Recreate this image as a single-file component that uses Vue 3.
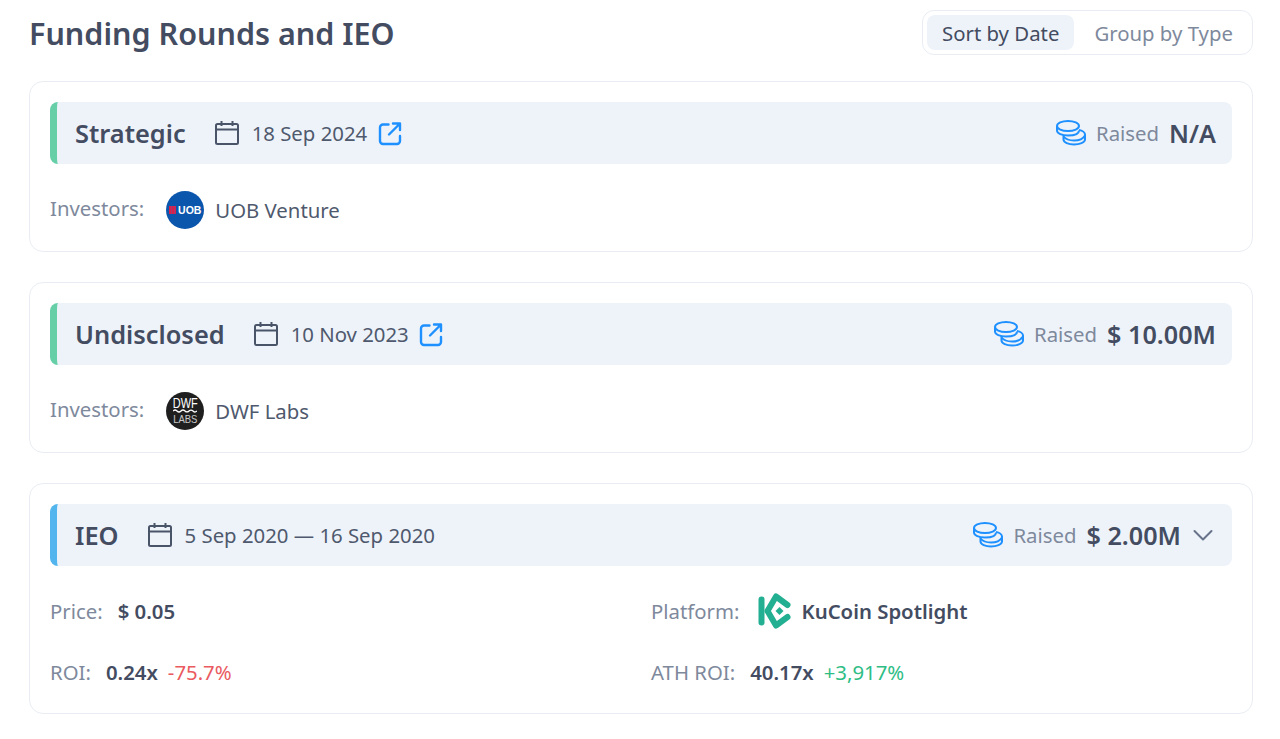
<template>
  <div class="page">
    <div class="top">
      <h2 class="title">Funding Rounds and IEO</h2>
      <div class="switch">
        <span class="switch-item active">Sort by Date</span>
        <span class="switch-item">Group by Type</span>
      </div>
    </div>

    <!-- Plain rounds -->
    <div v-for="round in rounds" :key="round.name" class="card">
      <div class="head green">
        <span class="name">{{ round.name }}</span>
        <svg class="cal" width="26" height="26" viewBox="0 0 26 26" fill="none" stroke="#4a5468" stroke-width="2">
          <rect x="2" y="4" width="22" height="20" rx="1.5" />
          <path d="M2 9.5H24M7.5 1V6M18.5 1V6" />
        </svg>
        <span class="date">{{ round.date }}</span>
        <svg class="ext" width="24" height="25" viewBox="0 0 24 25" fill="none" stroke="#1e90ff" stroke-width="2.4" stroke-linecap="round" stroke-linejoin="round">
          <path d="M10.500 3.500H5a3 3 0 0 0-3 3V20a3 3 0 0 0 3 3H19a3 3 0 0 0 3-3V15" />
          <path d="M11 13.500L21 3.500M15 2.500H22V9" />
        </svg>
        <div class="raised">
          <svg class="coins" width="30" height="26" viewBox="0 0 30 26" fill="none" stroke="#1e90ff" stroke-width="2">
            <ellipse cx="12" cy="6" rx="11" ry="5" />
            <path d="M1 6V10.500C1 13.500 6 15.500 12 15.500S23 14 23 10.500" />
            <path d="M7.500 15V19.500C7.500 22.500 12.500 24.500 18 24.500S29 22.500 29 19.500V14.500C29 12.500 26.500 10.500 23 10" />
            <path d="M7.500 16.500C9.500 19 14 20.500 18 20.500S27 19 29 15.500" />
          </svg>
          <span class="raised-label">Raised</span>
          <span class="amount">{{ round.amount }}</span>
        </div>
      </div>
      <div class="investors">
        <span class="label">Investors:</span>
        <span class="logo" :class="round.logoClass">
          <template v-if="round.logoClass === 'uob'"><i class="uob-mark"></i>UOB</template>
          <template v-else>
            <b>DWF</b>
            <svg class="wave" width="24" height="4" viewBox="0 0 24 4" fill="none" stroke="#ffffff" stroke-width="1.200">
              <path d="M0 2q2-2 4 0t4 0t4 0t4 0t4 0t4 0" />
            </svg>
            <em>LABS</em>
          </template>
        </span>
        <span class="investor">{{ round.investor }}</span>
      </div>
    </div>

    <!-- IEO -->
    <div class="card">
      <div class="head blue">
        <span class="name">IEO</span>
        <svg class="cal" width="26" height="26" viewBox="0 0 26 26" fill="none" stroke="#4a5468" stroke-width="2">
          <rect x="2" y="4" width="22" height="20" rx="1.500" />
          <path d="M2 9.500H24M7.500 1V6M18.500 1V6" />
        </svg>
        <span class="date">5 Sep 2020 — 16 Sep 2020</span>
        <div class="raised">
          <svg class="coins" width="30" height="26" viewBox="0 0 30 26" fill="none" stroke="#1e90ff" stroke-width="2">
            <ellipse cx="12" cy="6" rx="11" ry="5" />
            <path d="M1 6V10.500C1 13.500 6 15.500 12 15.500S23 14 23 10.500" />
            <path d="M7.500 15V19.500C7.500 22.500 12.500 24.500 18 24.500S29 22.500 29 19.500V14.500C29 12.500 26.500 10.500 23 10" />
            <path d="M7.500 16.500C9.500 19 14 20.500 18 20.500S27 19 29 15.500" />
          </svg>
          <span class="raised-label">Raised</span>
          <span class="amount">$ 2.00M</span>
          <svg class="chev" width="20" height="12" viewBox="0 0 20 12" fill="none" stroke="#66738a" stroke-width="2" stroke-linecap="round" stroke-linejoin="round">
            <path d="M1.500 2L10 10.500L18.500 2" />
          </svg>
        </div>
      </div>
      <div class="grid">
        <div class="cell">
          <span class="label">Price:</span>
          <span class="strong">$ 0.05</span>
        </div>
        <div class="cell">
          <span class="label">Platform:</span>
          <svg class="kucoin" width="34" height="36" viewBox="0 0 34 36" fill="none" stroke="#23af91" stroke-width="6" stroke-linecap="round" stroke-linejoin="round">
            <path d="M3.500 6.500V29.500" />
            <path d="M29.500 12L18 3.500L9.500 18L18 32.500L29.500 24" />
            <path d="M21.500 14L25.500 18L21.500 22L17.500 18Z" fill="#23af91" stroke="none" />
          </svg>
          <span class="strong">KuCoin Spotlight</span>
        </div>
        <div class="cell">
          <span class="label">ROI:</span>
          <span class="strong">0.24x</span>
          <span class="down">-75.7%</span>
        </div>
        <div class="cell">
          <span class="label">ATH ROI:</span>
          <span class="strong">40.17x</span>
          <span class="up">+3,917%</span>
        </div>
      </div>
    </div>
  </div>
</template>

<script setup>
const rounds = [
  { name: 'Strategic', date: '18 Sep 2024', amount: 'N/A', investor: 'UOB Venture', logoClass: 'uob' },
  { name: 'Undisclosed', date: '10 Nov 2023', amount: '$ 10.00M', investor: 'DWF Labs', logoClass: 'dwf' }
]
</script>

<style>
html,
body {
  margin: 0;
  background: #ffffff;
}
</style>

<style scoped>
.page {
  box-sizing: border-box;
  width: 1280px;
  height: 739px;
  padding: 10px 27px 0 29px;
  overflow: hidden;
  font-family: "Noto Sans", "Open Sans", sans-serif;
  color: #434c61;
}

.top {
  display: flex;
  align-items: center;
  justify-content: space-between;
  height: 45px;
  margin-bottom: 26px;
}

.title {
  margin: 0;
  font-size: 30.5px;
  font-weight: 600;
  line-height: 48px;
}

.switch {
  display: flex;
  box-sizing: border-box;
  height: 45px;
  width: 331px;
  padding: 4px;
  border: 1px solid #e9edf3;
  border-radius: 12px;
  gap: 5px;
}

.switch-item {
  display: flex;
  align-items: center;
  justify-content: center;
  font-size: 20.35px;
  color: #7e899c;
  padding: 0 15px;
  border-radius: 8px;
  white-space: nowrap;
}

.switch-item.active {
  background: #eef3fa;
  color: #434c61;
}

.card {
  box-sizing: border-box;
  padding: 20px 20px 0;
  border: 1px solid #e9edf3;
  border-radius: 14px;
  margin-bottom: 30px;
}

.head {
  display: flex;
  align-items: center;
  box-sizing: border-box;
  height: 62px;
  padding: 0 16px 0 18px;
  background: #eef3fa;
  border-left: 7px solid #66cfa8;
  border-radius: 8px;
}

.head.blue {
  border-left-color: #52b5ee;
}

.name {
  font-size: 25.4px;
  font-weight: 600;
  margin-right: 28px;
}

.cal {
  margin-right: 12px;
}

.date {
  font-size: 20.35px;
  color: #4f596d;
}

.ext {
  margin-left: 10.5px;
}

.raised {
  display: flex;
  align-items: center;
  margin-left: auto;
}

.raised-label {
  font-size: 20.35px;
  color: #7e899c;
  margin-left: 10px;
  margin-right: 10px;
}

.amount {
  font-size: 25.2px;
  font-weight: 600;
}

.chev {
  margin-left: 12px;
  margin-right: 3px;
}

.investors {
  display: flex;
  align-items: center;
  box-sizing: border-box;
  height: 87px;
  padding-top: 4px;
  font-size: 20.35px;
}

.label {
  color: #7e899c;
  font-size: 20.35px;
}

.investors .label {
  margin-top: -4px;
  margin-right: 22px;
}

.logo {
  display: flex;
  align-items: center;
  justify-content: center;
  width: 38px;
  height: 38px;
  border-radius: 50%;
  margin-right: 11px;
  color: #ffffff;
}

.uob {
  background: #0b56ad;
  font-family: "Liberation Sans", sans-serif;
  font-size: 10.5px;
  font-weight: 700;
  gap: 2px;
}

.uob-mark {
  display: block;
  width: 7px;
  height: 8px;
  background: repeating-linear-gradient(90deg, #d81e4d 0, #d81e4d 2px, #a83a6a 2px, #a83a6a 3px);
}

.dwf {
  flex-direction: column;
  background: #1f1f1f;
  font-family: "Liberation Sans", sans-serif;
}

.dwf b {
  display: block;
  font-size: 11px;
  font-weight: 400;
  line-height: 10px;
  transform: scaleY(1.3);
}

.wave {
  display: block;
  margin: 1px 0;
}

.dwf em {
  display: block;
  font-size: 9.500px;
  font-style: normal;
  line-height: 9px;
  opacity: 0.75;
  transform: scaleY(1.2);
}

.investor {
  font-size: 20.35px;
  color: #4f596d;
}

.grid {
  display: grid;
  grid-template-columns: 601px 1fr;
  grid-auto-rows: 61px;
  padding-top: 14px;
  padding-bottom: 11px;
}

.cell {
  display: flex;
  align-items: center;
  font-size: 20.35px;
}

.cell .label {
  margin-right: 15px;
}

.strong {
  font-weight: 600;
  color: #434c61;
}

.kucoin {
  margin-right: 10px;
  margin-left: 3px;
}

.down {
  margin-left: 10px;
  color: #ea5a5f;
}

.up {
  margin-left: 10px;
  color: #2ebd85;
}
</style>
